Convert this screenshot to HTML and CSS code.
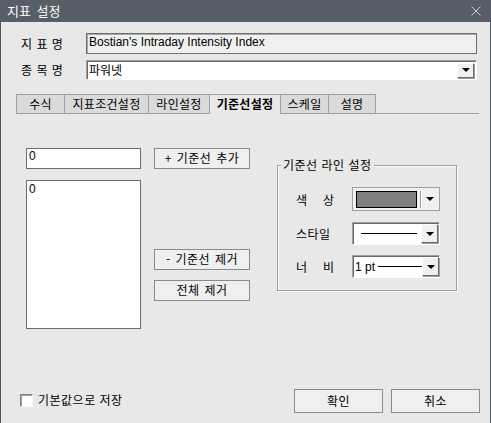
FILE: index.html
```html
<!DOCTYPE html>
<html lang="ko">
<head>
<meta charset="utf-8">
<title>지표 설정</title>
<link rel="stylesheet" href="styles.css">
</head>
<body>
<div class="window">
  <div class="titlebar">
    <span class="title">지표 설정</span>
    <svg class="close" width="10" height="10" viewBox="0 0 10 10"><path d="M0.5 0.5 L9.5 9.5 M9.5 0.5 L0.5 9.5" stroke="#c8ccd0" stroke-width="1" fill="none"/></svg>
  </div>
  <div class="body">
    <div class="row r1">
      <span class="label">지&nbsp;표&nbsp;명</span>
      <div class="field readonly">Bostian's Intraday Intensity Index</div>
    </div>
    <div class="row r2">
      <span class="label">종&nbsp;목&nbsp;명</span>
      <div class="combo main">
        <span class="ctext">파워넷</span>
        <span class="dbtn"><span class="tri"></span></span>
      </div>
    </div>
    <div class="tabs">
      <span class="tab w48">수식</span>
      <span class="tab w84">지표조건설정</span>
      <span class="tab w61">라인설정</span>
      <span class="tab w71 active">기준선설정</span>
      <span class="tab w48">스케일</span>
      <span class="tab w47 last">설명</span>
    </div>
    <div class="panel">
      <div class="leftcol">
        <div class="input">0</div>
        <div class="list">0</div>
      </div>
      <div class="btncol">
        <div class="btn">+ 기준선 추가</div>
        <div class="btn b2">- 기준선 제거</div>
        <div class="btn b3">전체 제거</div>
      </div>
      <div class="group">
        <span class="gtitle">기준선 라인 설정</span>
        <div class="grow g1">
          <span class="glabel">색&nbsp;&nbsp;&nbsp;&nbsp;상</span>
          <div class="colorcombo">
            <span class="swatch"></span>
            <span class="sep"></span>
            <span class="tri"></span>
          </div>
        </div>
        <div class="grow g2">
          <span class="glabel">스타일</span>
          <div class="combo small">
            <span class="ctext"><span class="line l1"></span></span>
            <span class="dbtn"><span class="tri"></span></span>
          </div>
        </div>
        <div class="grow g3">
          <span class="glabel">너&nbsp;&nbsp;&nbsp;&nbsp;비</span>
          <div class="combo small">
            <span class="ctext"><span class="pt">1 pt</span><span class="line l2"></span></span>
            <span class="dbtn"><span class="tri"></span></span>
          </div>
        </div>
      </div>
    </div>
    <div class="footer">
      <div class="check">
        <span class="box"></span>
        <span class="clabel">기본값으로 저장</span>
      </div>
      <div class="okbtns">
        <div class="btn big">확인</div>
        <div class="btn big">취소</div>
      </div>
    </div>
  </div>
</div>
</body>
</html>
```
FILE: styles.css
```css
* { box-sizing: border-box; }
html, body { margin: 0; padding: 0; }
body {
  width: 491px;
  height: 423px;
  overflow: hidden;
  background: #e8e8e8;
  font-family: "Noto Sans CJK KR", "Liberation Sans", sans-serif;
  font-size: 12px;
  color: #000;
}
.window {
  width: 491px;
  height: 423px;
  display: flex;
  flex-direction: column;
}
.titlebar {
  height: 22px;
  flex: none;
  background: #575e67;
  display: flex;
  align-items: center;
  justify-content: space-between;
  padding: 0 10px 0 7px;
}
.title {
  color: #fff;
  font-size: 13px;
  line-height: 22px;
  word-spacing: 2px;
}
.close { display: block; margin-top: -1px; }
.body {
  flex: 1;
  border-left: 1px solid #4b5560;
  border-right: 1px solid #4b5560;
  padding: 0 10px 0 20px;
  display: flex;
  flex-direction: column;
}
.row { display: flex; align-items: center; }
.r1 { margin-top: 11px; height: 21px; }
.r2 { margin-top: 6px; height: 20px; }
.label {
  width: 65px;
  flex: none;
  line-height: 14px;
  white-space: nowrap;
  letter-spacing: 0.5px;
}
.field {
  width: 391px;
  height: 21px;
  border: 1px solid #6e6e6e;
  box-shadow: inset 1px 1px 0 #a8a8a8;
  background: #f0f0f0;
  font-family: "Liberation Sans", "Noto Sans CJK KR", sans-serif;
  font-size: 12px;
  line-height: 17px;
  padding-left: 2px;
  white-space: nowrap;
}
.combo {
  display: flex;
  align-items: center;
  background: #fff;
  border: 1px solid #a0a0a0;
  border-right-color: #fff;
  border-bottom-color: #fff;
  box-shadow: inset 1px 1px 0 #696969;
}
.combo.main { width: 391px; height: 20px; padding: 0 1px 0 2px; }
.ctext { flex: 1; display: flex; align-items: center; line-height: 16px; white-space: nowrap; }
.dbtn {
  width: 17px;
  height: 15px;
  flex: none;
  background: #f0f0f0;
  border: 1px solid #fff;
  border-right-color: #696969;
  border-bottom-color: #696969;
  box-shadow: 1px 1px 0 #a0a0a0;
  display: flex;
  align-items: center;
  justify-content: center;
  margin-right: 1px;
}
.tri {
  width: 0;
  height: 0;
  border-left: 4px solid transparent;
  border-right: 4px solid transparent;
  border-top: 4px solid #000;
}
.tabs {
  display: flex;
  margin: 14px 0 0 -5px;
  width: 463px;
  height: 20px;
  border-bottom: 1px solid #a0a0a0;
}
.tab {
  height: 20px;
  border: 1px solid #a0a0a0;
  border-right: none;
  background: #dadada;
  text-align: center;
  line-height: 17px;
  flex: none;
  letter-spacing: 0.3px;
}
.tab.last { border-right: 1px solid #a0a0a0; }
.tab.active {
  background: #e8e8e8;
  font-weight: bold;
  border-bottom: none;
  margin-bottom: -1px;
  height: 20px;
}
.w48 { width: 48px; }
.w84 { width: 84px; }
.w61 { width: 61px; }
.w71 { width: 71px; }
.w47 { width: 48px; }
.panel {
  display: flex;
  align-items: flex-start;
  margin: 34px 0 0 5px;
}
.leftcol { width: 115px; flex: none; }
.input, .list {
  border: 1px solid #6e6e6e;
  background: #fff;
  font-family: "Liberation Sans", sans-serif;
  padding: 0 0 0 2px;
  line-height: 15px;
}
.input { height: 21px; }
.list { height: 149px; margin-top: 11px; padding-top: 1px; }
.btncol { width: 96px; margin-left: 13px; flex: none; }
.btn {
  height: 21px;
  border: 1px solid #8a8a8a;
  background: #efefef;
  text-align: center;
  line-height: 18px;
  word-spacing: 1px;
  letter-spacing: 0.5px;
  white-space: nowrap;
}
.b2 { margin-top: 80px; }
.b3 { margin-top: 10px; }
.group {
  position: relative;
  width: 180px;
  height: 126px;
  margin: 17px 0 0 27px;
  border: 1px solid #a0a0a0;
  box-shadow: inset 1px 1px 0 #fff, 1px 1px 0 #fff;
  flex: none;
}
.gtitle {
  position: absolute;
  left: 3px;
  top: -9px;
  padding: 0 2px;
  background: #e8e8e8;
  line-height: 16px;
  letter-spacing: 0.5px;
  white-space: nowrap;
}
.grow { display: flex; align-items: center; }
.g1 { margin-top: 21px; }
.g2 { margin-top: 11px; }
.g3 { margin-top: 10px; }
.glabel { width: 56px; margin-left: 18px; flex: none; white-space: nowrap; letter-spacing: 0.5px; }
.colorcombo {
  width: 88px;
  height: 24px;
  border: 1px solid #a0a0a0;
  background: #f0f0f0;
  display: flex;
  align-items: center;
  padding-left: 3px;
}
.swatch {
  width: 61px;
  height: 17px;
  background: #808080;
  border: 1px solid #000;
}
.sep {
  width: 2px;
  height: 17px;
  border-left: 1px solid #a0a0a0;
  background: #fff;
  margin-left: 3px;
}
.colorcombo .tri { margin-left: 4px; }
.combo.small { width: 88px; height: 23px; padding: 0 0 0 2px; }
.combo.small .dbtn { height: 19px; }
.line { display: block; height: 1px; background: #000; flex: none; }
.l1 { width: 56px; margin-left: 6px; }
.pt { font-family: "Liberation Sans", sans-serif; font-size: 12px; white-space: nowrap; flex: none; }
.l2 { width: 44px; margin-left: 3px; }
.footer {
  display: flex;
  align-items: flex-start;
  margin-top: 60px;
}
.check {
  display: flex;
  align-items: center;
  margin: 4px 0 0 -1px;
}
.box {
  width: 13px;
  height: 13px;
  background: #fff;
  border: 1px solid #808080;
  border-right-color: #f8f8f8;
  border-bottom-color: #f8f8f8;
  box-shadow: inset 1px 1px 0 #a0a0a0;
}
.clabel { margin-left: 5px; line-height: 14px; letter-spacing: 0.5px; }
.okbtns { display: flex; gap: 8px; margin-left: auto; }
.btn.big { width: 89px; height: 24px; line-height: 21px; }
```
